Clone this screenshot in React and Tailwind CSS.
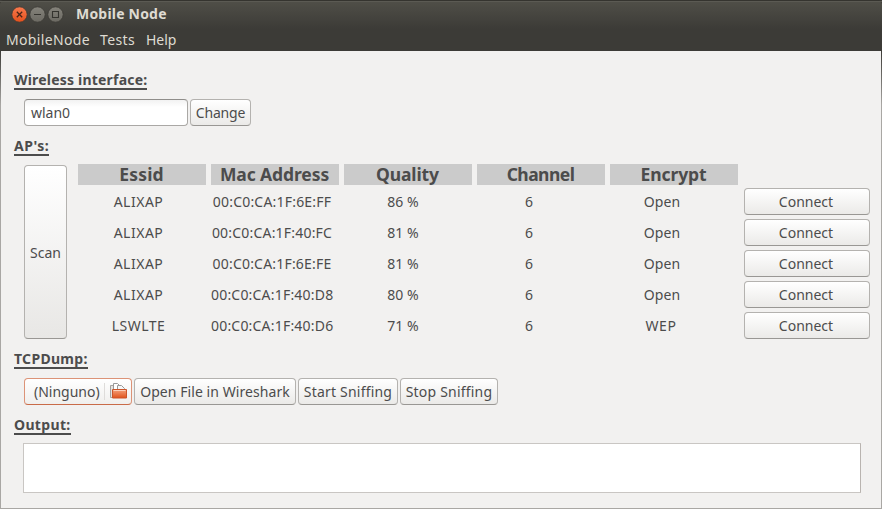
const button =
  'flex h-[27px] shrink-0 items-center justify-center rounded-[4px] border border-[#b4b2af] border-b-[#999794] bg-linear-to-b from-white to-[#ebeae8] whitespace-nowrap'

const columns = [
  { title: 'Essid', style: 'pr-[1px] tracking-[0.2px]' },
  { title: 'Mac Address', style: 'pr-[1px] tracking-[-0.1px]' },
  { title: 'Quality', style: 'pr-[1px] tracking-[-0.1px]' },
  { title: 'Channel', style: 'pr-[1px] tracking-[-0.55px]' },
  { title: 'Encrypt', style: 'pr-[1px] tracking-[-0.1px]' },
]

const accessPoints = [
  ['ALIXAP', '00:C0:CA:1F:6E:FF', '86 %', '6', 'Open'],
  ['ALIXAP', '00:C0:CA:1F:40:FC', '81 %', '6', 'Open'],
  ['ALIXAP', '00:C0:CA:1F:6E:FE', '81 %', '6', 'Open'],
  ['ALIXAP', '00:C0:CA:1F:40:D8', '80 %', '6', 'Open'],
  ['LSWLTE', '00:C0:CA:1F:40:D6', '71 %', '6', 'WEP'],
]

const cellStyles = [
  'pr-[7px] tracking-[0.5px]',
  'pr-[6px] tracking-[0.2px]',
  'pr-[10px]',
  'pr-[24px]',
  'pr-[24px] tracking-[0.1px]',
]

function Heading({ children, className }) {
  return (
    <h2 className={`h-[18px] shrink-0 border-b-2 border-[#4c4c4c] text-[14px] leading-[16px] font-bold whitespace-nowrap ${className}`}>
      {children}
    </h2>
  )
}

function WindowButtons() {
  return (
    <svg width="54" height="18" viewBox="0 0 54 18" fill="none">
      <defs>
        <linearGradient id="close" x1="0" y1="0" x2="0" y2="1">
          <stop offset="0" stopColor="#fa7a4e" />
          <stop offset="1" stopColor="#e4501c" />
        </linearGradient>
        <linearGradient id="grey" x1="0" y1="0" x2="0" y2="1">
          <stop offset="0" stopColor="#85837b" />
          <stop offset="1" stopColor="#6b6962" />
        </linearGradient>
      </defs>
      <circle cx="9.500" cy="8.500" r="7.700" fill="url(#close)" stroke="#3a3833" strokeWidth=".8" />
      <circle cx="27.500" cy="8.500" r="7.700" fill="url(#grey)" stroke="#3a3833" strokeWidth=".8" />
      <circle cx="45.500" cy="8.500" r="7.700" fill="url(#grey)" stroke="#3a3833" strokeWidth=".8" />
      <path d="M6.800 5.800l5.400 5.400M12.200 5.800l-5.400 5.400" stroke="#4a2518" strokeWidth="1.3" />
      <path d="M24 8.500h7M42.500 5.500h6v6h-6z" stroke="#35342f" strokeWidth="1.1" />
    </svg>
  )
}

function FolderIcon() {
  return (
    <svg width="17" height="17" viewBox="0 0 17 17" fill="none">
      <defs>
        <linearGradient id="folder" x1="0" y1="0" x2="0" y2="1">
          <stop offset="0" stopColor="#f4a27c" />
          <stop offset="1" stopColor="#e0531c" />
        </linearGradient>
      </defs>
      <path d="M.5 14.500V2.500h3v3h10v9z" fill="#e4e2df" stroke="#a5a3a0" />
      <path d="M3.500 12V.5h4l3 3V10" fill="#fff" stroke="#999" />
      <path d="M7.500 8V2.500h4l3 3V9" fill="#f6f6f6" stroke="#999" />
      <path d="M2.500 6.500h14v8.500h-14z" fill="url(#folder)" stroke="#cc552a" />
      <path d="M3.500 7.500h12" stroke="#fbd0bb" />
    </svg>
  )
}

export default function App() {
  return (
    <div className="h-[509px] w-[882px] overflow-hidden bg-linear-to-b from-[#3c3b37] from-[50px] to-[#a9a7a4] to-[105px] font-['Noto_Sans','Open_Sans',sans-serif] text-[14px] text-[#4c4c4c]">
      <header className="h-[51px] rounded-t-[4px] border-t border-[#35342f] bg-linear-to-b from-[#504f48] to-[#3c3b37] to-[28px] text-[#dfdbd2]">
        <div className="flex h-[26px] items-center border-t border-[#5b5a53] pl-[10px]">
          <WindowButtons />
          <h1 className="ml-[12px] pb-[2px] text-[14px] font-bold tracking-[0.2px]">Mobile Node</h1>
        </div>
        <nav className="flex h-[24px] items-center gap-[10px] pt-[1px] pl-[6px]">
          <span className="tracking-[0.35px]">MobileNode</span>
          <span className="tracking-[0.35px]">Tests</span>
          <span className="ml-px">Help</span>
        </nav>
      </header>

      <main className="mx-px flex h-[457px] flex-col items-start bg-[#f2f1f0] pl-[13px]">
        <Heading className="mt-[21px] w-[133px] tracking-[0.2px]">Wireless interface:</Heading>
        <div className="mt-[9px] ml-[10px] flex gap-[2px]">
          <div className="flex h-[27px] w-[164px] items-center rounded-[4px] border border-[#aaa8a5] border-t-[#8f8d8a] bg-linear-to-b from-[#f2f2f2] to-white to-[7px] pl-[6px]">wlan0</div>
          <button className={`${button} w-[61px] tracking-[-0.15px]`}>Change</button>
        </div>

        <Heading className="mt-[12px] w-[35px] tracking-[0.5px]">AP's:</Heading>
        <div className="mt-[8px] ml-[10px] flex h-[175px]">
          <button className="mt-px flex h-[174px] w-[43px] items-center justify-center rounded-[4px] border border-[#b4b2af] border-b-[#999794] bg-linear-to-b from-white to-[#e8e7e5]">Scan</button>
          <div className="ml-[11px] flex flex-col">
            <div className="mb-[3px] flex gap-[5px]">
              {columns.map((c) => (
                <div key={c.title} className={`flex h-[21px] w-[128px] items-center justify-center bg-[#cbcbcb] text-[17.500px] font-bold ${c.style}`}>
                  {c.title}
                </div>
              ))}
            </div>
            <div className="flex flex-col gap-[4px]">
              {accessPoints.map((row) => (
                <div key={row[1]} className="flex h-[27px] items-center gap-[5px]">
                  {row.map((value, i) => (
                    <div key={i} className={`w-[128px] text-center whitespace-nowrap ${value === 'WEP' ? 'pr-[26px] tracking-[0.6px]' : cellStyles[i]}`}>{value}</div>
                  ))}
                  <button className={`${button} ml-px w-[126px] pr-[2px]`}>Connect</button>
                </div>
              ))}
            </div>
          </div>
        </div>

        <Heading className="mt-[12px] w-[74px] tracking-[0.3px]">TCPDump:</Heading>
        <div className="mt-[9px] ml-[10px] flex gap-[2px]">
          <button className="flex h-[27px] w-[108px] items-center rounded-[4px] border border-[#dc9377] border-b-[#c96b48] bg-linear-to-b from-white to-[#f0efed] pl-[9px]">
            <span className="w-[70px] text-left whitespace-nowrap">(Ninguno)</span>
            <span className="mr-[5px] h-[17px] w-px bg-[#dedcda]" />
            <FolderIcon />
          </button>
          <button className={`${button} w-[162px] tracking-[0.07px]`}>Open File in Wireshark</button>
          <button className={`${button} w-[100px] tracking-[0.2px]`}>Start Sniffing</button>
          <button className={`${button} w-[98px] tracking-[0.2px]`}>Stop Sniffing</button>
        </div>

        <Heading className="mt-[12px] w-[57px] tracking-[0.35px]">Output:</Heading>
        <div className="mt-[8px] ml-[9px] h-[50px] w-[838px] border border-[#c9c6c3] border-r-[#b9b4b0] bg-white" />
      </main>
    </div>
  )
}
